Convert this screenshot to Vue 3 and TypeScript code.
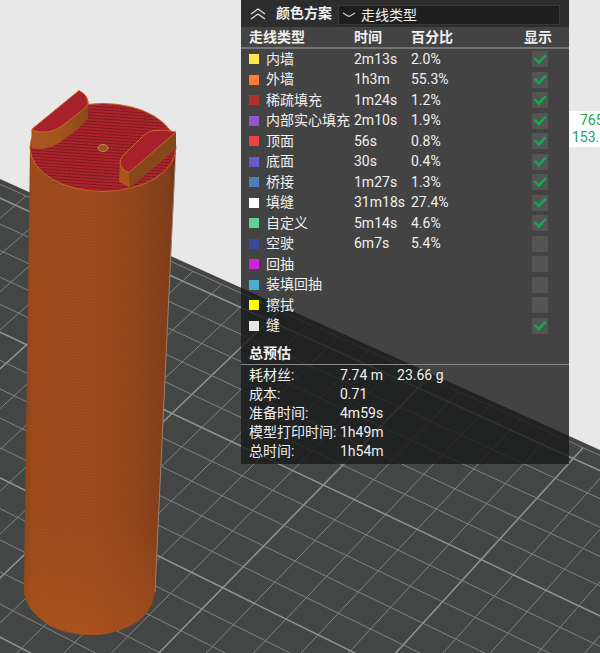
<script setup lang="ts">
import { computed, ref } from 'vue'

interface LineType {
  name: string
  color: string
  time: string
  percent: string
  shown: boolean
}

interface GridLine {
  key: string
  x1: number
  y1: number
  x2: number
  y2: number
  major: boolean
}

const scheme = ref('line')
const collapsed = ref(false)

const lineTypes = ref<LineType[]>([
  { name: '内墙', color: '#ffe64d', time: '2m13s', percent: '2.0%', shown: true },
  { name: '外墙', color: '#ff7d38', time: '1h3m', percent: '55.3%', shown: true },
  { name: '稀疏填充', color: '#b03029', time: '1m24s', percent: '1.2%', shown: true },
  { name: '内部实心填充', color: '#9654cc', time: '2m10s', percent: '1.9%', shown: true },
  { name: '顶面', color: '#f04040', time: '56s', percent: '0.8%', shown: true },
  { name: '底面', color: '#665cc7', time: '30s', percent: '0.4%', shown: true },
  { name: '桥接', color: '#4d80ba', time: '1m27s', percent: '1.3%', shown: true },
  { name: '填缝', color: '#ffffff', time: '31m18s', percent: '27.4%', shown: true },
  { name: '自定义', color: '#5ed194', time: '5m14s', percent: '4.6%', shown: true },
  { name: '空驶', color: '#38489b', time: '6m7s', percent: '5.4%', shown: false },
  { name: '回抽', color: '#cd22d6', time: '', percent: '', shown: false },
  { name: '装填回抽', color: '#49adcf', time: '', percent: '', shown: false },
  { name: '擦拭', color: '#ffff00', time: '', percent: '', shown: false },
  { name: '缝', color: '#e6e6e6', time: '', percent: '', shown: true },
])

const estimates = [
  { label: '耗材丝:', values: ['7.74 m', '23.66 g'] },
  { label: '成本:', values: ['0.71'] },
  { label: '准备时间:', values: ['4m59s'] },
  { label: '模型打印时间:', values: ['1h49m'] },
  { label: '总时间:', values: ['1h54m'] },
]

// Perspective projection of a bed coordinate (in grid cells) onto the canvas.
function project(u: number, v: number) {
  const w = 1 - 0.004138 * u + 0.005847 * v
  return {
    x: (323.3 + 29.55 * u + 21.42 * v) / w,
    y: (485 + 12.6 * u - 17.12 * v) / w,
  }
}

const bed = { left: -15.75, right: 16, front: -18, back: 5.75 }

const bedOutline = computed(() =>
  [
    project(bed.left, bed.back),
    project(bed.right, bed.back),
    project(bed.right, bed.front),
    project(bed.left, bed.front),
  ]
    .map((p) => `${p.x.toFixed(1)},${p.y.toFixed(1)}`)
    .join(' '),
)

function segment(key: string, u1: number, v1: number, u2: number, v2: number, major: boolean): GridLine {
  const a = project(u1, v1)
  const b = project(u2, v2)
  return { key, x1: a.x, y1: a.y, x2: b.x, y2: b.y, major }
}

const gridLines = computed(() => {
  const lines: GridLine[] = []
  const left = -15.5
  const back = 5.55
  for (let u = -15; u <= 15; u++) {
    lines.push(segment(`u${u}`, u, bed.front, u, back, u % 5 === 0))
  }
  for (let v = bed.front; v <= 5; v++) {
    lines.push(segment(`v${v}`, left, v, bed.right, v, v % 5 === 0))
  }
  lines.push(segment('back', left, back, bed.right, back, false))
  lines.push(segment('left', left, bed.front, left, back, false))
  return lines
})
</script>

<template>
  <main class="viewer">
    <svg class="scene" viewBox="0 0 600 653" preserveAspectRatio="xMinYMin slice" aria-hidden="true">
      <defs>
        <linearGradient id="wall" x1="0" x2="1" y1="0" y2="0">
          <stop offset="0" stop-color="#8f451a" />
          <stop offset="0.06" stop-color="#9f4c1c" />
          <stop offset="0.45" stop-color="#9e4b1e" />
          <stop offset="0.75" stop-color="#90451c" />
          <stop offset="0.96" stop-color="#823d1a" />
          <stop offset="1" stop-color="#6b3215" />
        </linearGradient>
        <linearGradient id="foot" x1="0" x2="0" y1="0" y2="1">
          <stop offset="0" stop-color="#c0601c" stop-opacity="0" />
          <stop offset="1" stop-color="#c0601c" stop-opacity="0.35" />
        </linearGradient>
        <linearGradient id="tab" x1="0" x2="1" y1="0" y2="0">
          <stop offset="0" stop-color="#ad5720" />
          <stop offset="0.5" stop-color="#a3531e" />
          <stop offset="1" stop-color="#8b481a" />
        </linearGradient>
        <pattern id="infill" width="4" height="3" patternUnits="userSpaceOnUse" patternTransform="rotate(4)">
          <rect width="4" height="3" fill="#b3222e" />
          <rect width="4" height="1" fill="#7c1b20" />
          <rect y="1" width="1" height="1" fill="#8c2626" />
          <rect x="2" y="2" width="1" height="1" fill="#a02a2c" />
        </pattern>
        <pattern id="layers" width="8" height="3" patternUnits="userSpaceOnUse" patternTransform="rotate(5)">
          <rect width="8" height="1" fill="#5c2b10" opacity="0.08" />
        </pattern>
      </defs>

      <polygon :points="bedOutline" class="bed" />
      <line
        v-for="line in gridLines"
        :key="line.key"
        :x1="line.x1"
        :y1="line.y1"
        :x2="line.x2"
        :y2="line.y2"
        :class="['grid-line', { major: line.major }]"
      />

      <g>
        <path
          d="M30 147 L24 590 C24 604 33 613 47 624 C58 631 76 635 92 635 C112 635 128 628 140 620 C150 611 154 602 155 592 L176 147 Z"
          fill="url(#wall)"
        />
        <path
          d="M30 147 L24 590 C24 604 33 613 47 624 C58 631 76 635 92 635 C112 635 128 628 140 620 C150 611 154 602 155 592 L176 147 Z"
          fill="url(#layers)"
        />
        <path
          d="M25 520 L24 590 C24 604 33 613 47 624 C58 631 76 635 92 635 C112 635 128 628 140 620 C150 611 154 602 155 592 L158 520 Z"
          fill="url(#foot)"
        />
        <path d="M175 165 L155 592" stroke="#9a806c" stroke-width="1" fill="none" />
        <ellipse cx="103" cy="147.500" rx="73" ry="44" fill="url(#infill)" stroke="#c36a26" stroke-width="1" />
        <ellipse cx="103" cy="148" rx="5" ry="3.500" fill="#9c5420" stroke="#c98a5c" stroke-width="1" />

        <path
          d="M31.500 129 L31.500 148 Q46 151 59 143 Q78 130 86 121 L88 118 L88.500 101 L80 112 Z"
          fill="url(#tab)"
        />
        <path
          d="M79 90.500 Q88 95 88 103 Q86 108 80 112 L62 126 Q54 132 43 132 Q34 132 32 129 Z"
          fill="#a8202c"
          stroke="#c86a22"
          stroke-width="1"
        />

        <path d="M176 132 L176 149 L130 188 L129 172 Z" fill="#85481a" />
        <path d="M120 161 L119 182 L130 188 L129 172 Z" fill="#a9541f" />
        <path
          d="M176 132 L166 130 L154 130.500 Q149 131 143 136 L123 156 Q120 159 120 163 Q121 170 129 172.500 Z"
          fill="#a8202c"
          stroke="#c86a22"
          stroke-width="1"
        />
      </g>
    </svg>

    <section class="panel">
      <header class="bar">
        <button
          type="button"
          class="collapse"
          aria-label="折叠"
          :aria-expanded="!collapsed"
          @click="collapsed = !collapsed"
        >
          <svg width="16" height="12" viewBox="0 0 16 12" fill="none" stroke="#e4e4e4" stroke-width="1.200">
            <path d="M1 6 L8 1 L15 6 M1 11 L8 6 L15 11" />
          </svg>
        </button>
        <label class="title" for="scheme">颜色方案</label>
        <div class="combo">
          <svg class="caret" width="14" height="6" viewBox="0 0 14 6" fill="none" stroke="#d0d0d0" stroke-width="1.200">
            <path d="M1 1 L6 4 Q7 4.600 8 4 L13 1" />
          </svg>
          <select id="scheme" v-model="scheme">
            <option value="line">走线类型</option>
          </select>
        </div>
      </header>

      <template v-if="!collapsed">
        <table class="types">
          <thead>
            <tr>
              <th class="name">走线类型</th>
              <th class="time">时间</th>
              <th class="percent">百分比</th>
              <th class="show">显示</th>
            </tr>
          </thead>
          <tbody>
            <tr v-for="(type, i) in lineTypes" :key="type.name">
              <td class="name">
                <label class="entry" :for="`show-${i}`">
                  <span class="swatch" :style="{ background: type.color }"></span>{{ type.name }}
                </label>
              </td>
              <td>{{ type.time }}</td>
              <td>{{ type.percent }}</td>
              <td class="show"><input :id="`show-${i}`" v-model="type.shown" type="checkbox" /></td>
            </tr>
          </tbody>
        </table>

        <h2 class="subtitle">总预估</h2>
        <dl class="totals">
          <div v-for="item in estimates" :key="item.label" class="total">
            <dt>{{ item.label }}</dt>
            <dd v-for="value in item.values" :key="value">{{ value }}</dd>
          </div>
        </dl>
      </template>
    </section>

    <output class="readout">
      <span>765</span>
      <span>153.</span>
    </output>
  </main>
</template>

<style>
body {
  margin: 0;
}
</style>

<style scoped>
.viewer {
  position: relative;
  display: flex;
  justify-content: flex-end;
  align-items: flex-start;
  min-height: 100vh;
  overflow: hidden;
  background: #e8e8e8;
  color: #f0f0f0;
  font-family: Roboto, 'Noto Sans CJK SC', sans-serif;
  font-size: 14px;
  line-height: 19px;
}

.scene {
  position: absolute;
  inset: 0;
  width: 100%;
  height: 100%;
}

.bed {
  fill: #444645;
}

.grid-line {
  stroke: #808281;
  stroke-width: 1;
}

.grid-line.major {
  stroke: #929493;
  stroke-width: 1.5;
}

.panel {
  position: relative;
  width: 328px;
  padding-bottom: 3px;
  background: rgba(25, 25, 25, 0.8);
}

.bar {
  display: flex;
  align-items: center;
  height: 27px;
  padding: 0 9px;
  background: #2d2d2d;
}

.collapse {
  display: flex;
  margin: 0;
  padding: 0;
  border: 0;
  background: none;
}

.title {
  margin: 0 6px 0 10px;
  font-weight: 700;
}

.combo {
  display: flex;
  flex: 1;
  align-items: center;
  align-self: flex-end;
  height: 20px;
  margin-bottom: 2px;
  padding-left: 3px;
  box-sizing: border-box;
  border: 1px solid #383838;
  background: #1e1e1e;
}

.caret {
  flex: none;
}

select {
  flex: 1;
  margin: 0;
  padding: 0 0 0 5px;
  border: 0;
  appearance: none;
  background: none;
  color: inherit;
  font: inherit;
  line-height: 18px;
}

.types {
  width: 100%;
  border-collapse: collapse;
  table-layout: fixed;
}

.types th,
.types td {
  padding: 0;
  text-align: left;
  white-space: nowrap;
}

.types th {
  height: 20px;
  border-bottom: 2px solid #747474;
  font-weight: 700;
}

.types td {
  height: 20px;
}

.types tr:nth-child(even) td {
  height: 21px;
}

.types .name {
  width: 105px;
  padding-left: 8px;
}

.types .time {
  width: 57px;
}

.types .show {
  padding-right: 17px;
  text-align: right;
}

.types td.show {
  padding-right: 21px;
}

.entry {
  display: flex;
  align-items: center;
}

.swatch {
  width: 10px;
  height: 10px;
  margin-right: 7px;
}

input {
  display: block;
  width: 16px;
  height: 16px;
  margin: 0 0 0 auto;
  appearance: none;
  background: #545454;
}

input:checked::before {
  content: '';
  display: block;
  width: 16px;
  height: 16px;
  background: #12a84b;
  clip-path: polygon(11% 50%, 22% 40%, 42% 59%, 80% 20%, 91% 31%, 43% 84%);
}

.subtitle {
  margin: 8px 0 0;
  padding: 0 8px 1px;
  border-bottom: 1px solid #858585;
  font-size: 14px;
  font-weight: 700;
}

.totals {
  margin: 0;
  padding: 1px 8px 0;
}

.total {
  display: flex;
  gap: 14px;
}

.total dt {
  width: 91px;
  margin-right: -14px;
  white-space: nowrap;
}

.total dd {
  margin: 0;
}

.readout {
  position: relative;
  display: flex;
  flex-direction: column;
  width: 28px;
  margin-top: 111px;
  padding: 1px 0 1px 3px;
  background: #ffffff;
  color: #22a455;
  line-height: 17px;
}

.readout span:first-child {
  padding-left: 8px;
}
</style>
